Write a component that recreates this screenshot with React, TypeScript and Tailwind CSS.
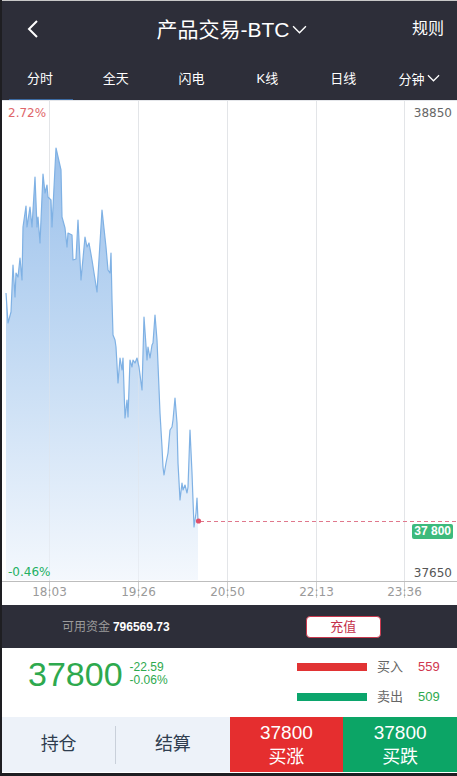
import React from "react";

const PTS: [number, number][] = [
  [6, 293], [8, 323], [11, 312], [13, 265], [15, 297], [16, 273], [18, 277], [20, 258], [22, 280],
  [23, 227], [26, 206], [27, 227], [30, 207], [32, 227], [35, 177], [37, 227], [38, 217], [40, 243],
  [43, 174], [45, 193], [47, 185], [48, 197], [51, 200], [52, 227], [56, 148], [61, 170], [62, 217],
  [65, 228], [67, 247], [68, 233], [72, 235], [73, 260], [76, 259], [78, 220], [81, 280], [85, 237],
  [87, 247], [89, 243], [92, 260], [97, 292], [102, 210], [106, 247], [108, 270], [110, 273], [111, 253],
  [112, 300], [113, 335], [115, 340], [116, 347], [118, 383], [120, 358], [122, 370], [123, 358],
  [125, 418], [127, 400], [128, 417], [130, 360], [132, 367], [133, 360], [135, 363], [137, 358],
  [139, 367], [142, 390], [144, 317], [147, 360], [148, 347], [150, 358], [152, 345], [153, 343],
  [155, 315], [157, 340], [160, 413], [162, 447], [163, 467], [164, 475], [166, 463], [168, 453],
  [170, 430], [172, 427], [173, 420], [175, 398], [177, 423], [178, 463], [180, 500], [182, 483],
  [183, 490], [185, 485], [187, 493], [188, 487], [190, 430], [192, 473], [194, 527], [196, 513],
  [197, 498], [198, 521],
];

const linePath = PTS.map((p, i) => `${i === 0 ? "M" : "L"}${p[0]} ${p[1]}`).join(" ");
const areaPath = `${linePath} L198 580 L6 580 Z`;

const GRID_X = [49, 138, 227, 316, 404];
const TIMES = ["18:03", "19:26", "20:50", "22:13", "23:36"];

const CJK = "font-['Liberation_Sans','Noto_Sans_CJK_SC',sans-serif]";

function Chevron({ className }: { className?: string }) {
  return (
    <svg className={className} viewBox="0 0 14 8" fill="none">
      <polyline points="1,1 7,7 13,1" stroke="currentColor" strokeWidth="1.3" />
    </svg>
  );
}

export default function App() {
  return (
    <div className={`w-[457px] h-[776px] flex flex-col bg-white border-l-2 border-[#1e1e22] ${CJK}`}>
      {/* Header */}
      <div className="h-[57px] border-t border-[#c8c8c8] bg-[#2d2e39] flex items-center relative text-white">
        <div className="w-[74px] pl-[25px] flex items-center">
          <svg width="12" height="18" viewBox="0 0 12 18" fill="none">
            <polyline points="10,1 2,9 10,17" stroke="white" strokeWidth="2" />
          </svg>
        </div>
        <div className="flex-1 flex items-center justify-center pl-[4px]">
          <span className="text-[21px] leading-none">产品交易-BTC</span>
          <Chevron className="w-[15px] h-[9px] ml-[2px] mt-[1px]" />
        </div>
        <div className="w-[74px] pr-[13px] text-right text-[16px]">规则</div>
      </div>

      {/* Tabs */}
      <div className="h-[43px] bg-[#2d2e39] grid grid-cols-6 text-white text-[13px]">
        <div className="relative flex items-center justify-center">
          分时
          <div className="absolute left-[7px] right-[5px] bottom-[-2px] h-[3px] bg-[#3b6aa2]" />
        </div>
        <div className="flex items-center justify-center">全天</div>
        <div className="flex items-center justify-center">闪电</div>
        <div className="flex items-center justify-center">K线</div>
        <div className="flex items-center justify-center">日线</div>
        <div className="flex items-center justify-center pt-[3px]">
          分钟
          <Chevron className="w-[13px] h-[8px] ml-[2px] mb-[4px]" />
        </div>
      </div>

      {/* Chart */}
      <div className="relative h-[505px] bg-white">
        <svg className="block w-[455px] h-[505px]" viewBox="2 100 455 505">
          <defs>
            <linearGradient id="fillg" gradientUnits="userSpaceOnUse" x1="0" y1="148" x2="0" y2="580">
              <stop offset="0" stopColor="#9cc1eb" />
              <stop offset="0.45" stopColor="#c1d9f3" />
              <stop offset="1" stopColor="#f4f8fd" />
            </linearGradient>
          </defs>
          <line x1="2" y1="100.5" x2="457" y2="100.5" stroke="#e4e6ea" strokeWidth="1" />
          {GRID_X.map((x) => (
            <line key={x} x1={x + 0.5} y1="101" x2={x + 0.5} y2="581" stroke="#e6e6e6" strokeWidth="1" />
          ))}
          <path d={areaPath} fill="url(#fillg)" />
          {GRID_X.map((x) => (
            <line key={"g" + x} x1={x + 0.5} y1="101" x2={x + 0.5} y2="581" stroke="#dfe3ea" strokeOpacity="0.5" strokeWidth="1" />
          ))}
          <path d={linePath} fill="none" stroke="#7fb1e4" strokeWidth="1.2" strokeLinejoin="round" />
          <line x1="200" y1="521.5" x2="457" y2="521.5" stroke="#e0788c" strokeWidth="1" strokeDasharray="4 3" />
          <circle cx="198.5" cy="521" r="2.6" fill="#e0506a" />
          <line x1="2" y1="581.5" x2="457" y2="581.5" stroke="#bdbdbd" strokeWidth="1" />
          {GRID_X.map((x) => (
            <line key={"t" + x} x1={x + 0.5} y1="582" x2={x + 0.5} y2="598" stroke="#cfcfcf" strokeWidth="1" />
          ))}
        </svg>

        <div className="absolute left-[6px] top-[5px] text-[12px] leading-[16px] text-[#e0666a] font-['DejaVu_Sans',sans-serif]">2.72%</div>
        <div className="absolute right-[5px] top-[5px] text-[12px] leading-[16px] text-[#666] font-['DejaVu_Sans',sans-serif]">38850</div>
        <div className="absolute left-[6px] top-[464px] text-[12px] leading-[16px] text-[#22b063] font-['DejaVu_Sans',sans-serif]">-0.46%</div>
        <div className="absolute right-[5px] top-[465px] text-[12px] leading-[16px] text-[#555] font-['DejaVu_Sans',sans-serif]">37650</div>
        <div className="absolute right-[4px] top-[424px] h-[15px] px-[2px] rounded-[2px] bg-[#3dba7c] text-white text-[12px] font-bold leading-[15px] font-['Liberation_Sans',sans-serif]">
          37 800
        </div>
        {GRID_X.map((x, i) => (
          <div
            key={x}
            className="absolute top-[484px] w-[50px] -ml-[25px] text-center text-[12px] leading-[16px] text-[#9a9a9a] font-['DejaVu_Sans',sans-serif]"
            style={{ left: x - 2 + 0.5 }}
          >
            {TIMES[i]}
          </div>
        ))}
      </div>

      {/* Funds bar */}
      <div className="h-[43px] bg-[#2d2e39] grid grid-cols-2 items-center">
        <div className="flex items-center justify-center text-[12px]">
          <span className="text-[#9b9b9b]">可用资金</span>
          <span className="ml-[3px] text-white font-bold">796569.73</span>
        </div>
        <div className="flex items-center justify-center">
          <div className="w-[75px] h-[22px] rounded-[4px] bg-white border border-[#c9394e] flex items-center justify-center text-[13px] text-[#c4304a]">
            充值
          </div>
        </div>
      </div>

      {/* Price row */}
      <div className="h-[69px] flex">
        <div className="w-[295px] flex items-start pl-[26px]">
          <div className="pt-[7px] text-[34px] leading-[38px] text-[#2ea94e]">37800</div>
          <div className="pt-[13px] ml-[7px] text-[12px] leading-[13px] text-[#2ea94e]">
            <div>-22.59</div>
            <div>-0.06%</div>
          </div>
        </div>
        <div className="flex flex-col pt-[10px] gap-[12px]">
          <div className="h-[18px] flex items-center">
            <div className="w-[70px] h-[8px] bg-[#e13334]" />
            <span className="ml-[10px] text-[13px] text-[#666]">买入</span>
            <span className="ml-[15px] text-[13px] text-[#d0364e]">559</span>
          </div>
          <div className="h-[18px] flex items-center">
            <div className="w-[70px] h-[8px] bg-[#0ba56c]" />
            <span className="ml-[10px] text-[13px] text-[#666]">卖出</span>
            <span className="ml-[15px] text-[13px] text-[#2ea94e]">509</span>
          </div>
        </div>
      </div>

      {/* Bottom actions */}
      <div className="h-[55px] grid grid-cols-2">
        <div className="bg-[#edf2f9] flex items-center text-[18px] text-[#2f3d4f]">
          <div className="flex-1 text-center">持仓</div>
          <div className="w-px h-[38px] bg-[#c9d0da]" />
          <div className="flex-1 text-center">结算</div>
        </div>
        <div className="grid grid-cols-2 text-white text-[18px]">
          <div className="bg-[#e52e2f] flex flex-col items-center justify-center leading-[25px]">
            <span className="text-[19px]">37800</span>
            <span>买涨</span>
          </div>
          <div className="bg-[#0ca566] flex flex-col items-center justify-center leading-[25px]">
            <span className="text-[19px]">37800</span>
            <span>买跌</span>
          </div>
        </div>
      </div>
      <div className="h-[1px] bg-white" />
      <div className="h-[3px] bg-[#1e1e22]" />
    </div>
  );
}
